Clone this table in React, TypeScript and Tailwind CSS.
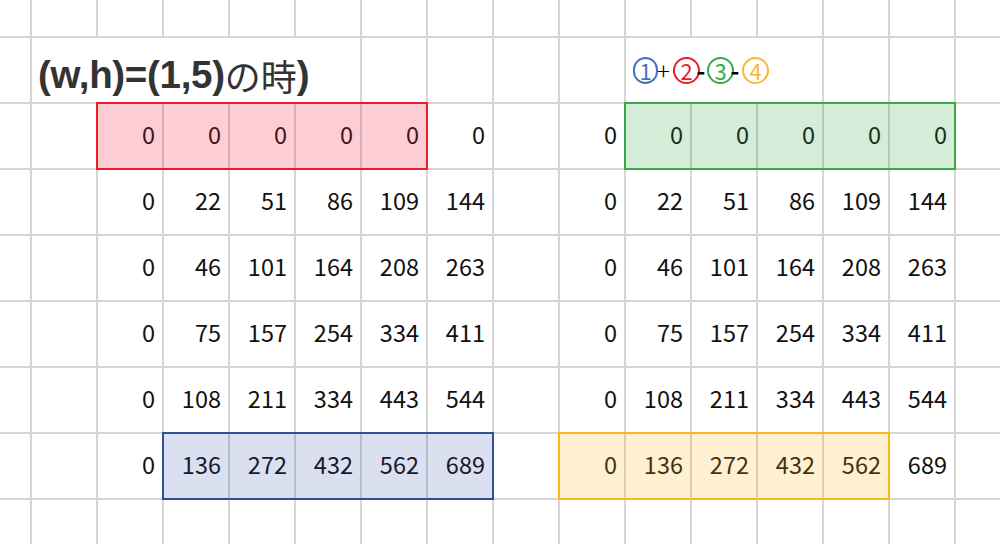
import React from 'react';

const values: number[][] = [
  [0, 0, 0, 0, 0, 0],
  [0, 22, 51, 86, 109, 144],
  [0, 46, 101, 164, 208, 263],
  [0, 75, 157, 254, 334, 411],
  [0, 108, 211, 334, 443, 544],
  [0, 136, 272, 432, 562, 689],
];

const cell = 'bg-white';
const numFont = { fontFamily: '"Noto Sans CJK JP", "Noto Sans", sans-serif' };

// highlight box laid over 5 cells, starts in its host cell
type Box = 'red' | 'green' | 'blue' | 'yellow';
const boxClass: Record<Box, string> = {
  red: 'border-[#ee1d2a] bg-[rgba(240,20,50,0.21)]',
  green: 'border-[#3aa847] bg-[rgba(40,160,60,0.2)]',
  blue: 'border-[#2f4f96] bg-[rgba(40,70,170,0.17)]',
  yellow: 'border-[#fbb917] bg-[rgba(250,180,20,0.2)]',
};

const NumCell: React.FC<{ value?: number; box?: Box }> = ({ value, box }) => (
  <div
    className={`${cell} ${box ? 'relative' : ''} flex items-center justify-end pr-[7px] pb-[2px] text-[23.5px] text-[#111]`}
    style={numFont}
  >
    {value}
    {box && (
      <div
        className={`absolute z-10 -left-[2px] -top-[2px] w-[332px] h-[68px] border-2 pointer-events-none ${boxClass[box]}`}
      />
    )}
  </div>
);

const Circle: React.FC<{ n: string; color: string; className?: string }> = ({ n, color, className }) => (
  <span
    className={`inline-flex items-center justify-center h-[27px] rounded-full border-2 text-[22px] leading-none ${color} ${className ?? ''}`}
  >
    {n}
  </span>
);

const Op: React.FC<{ children: string; className?: string }> = ({ children, className }) => (
  <span className={`inline-flex justify-center text-[24px] leading-none text-black ${className ?? ''}`}>
    {children}
  </span>
);

export default function App() {
  const dataRow = (r: number) => {
    const v = values[r];
    return (
      <React.Fragment key={r}>
        <div className={cell} />
        <div className={cell} />
        {v.map((x, i) => (
          <NumCell
            key={`l${i}`}
            value={x}
            box={r === 0 && i === 0 ? 'red' : r === 5 && i === 1 ? 'blue' : undefined}
          />
        ))}
        <div className={cell} />
        {v.map((x, i) => (
          <NumCell
            key={`r${i}`}
            value={x}
            box={r === 0 && i === 1 ? 'green' : r === 5 && i === 0 ? 'yellow' : undefined}
          />
        ))}
        <div className={cell} />
      </React.Fragment>
    );
  };

  const emptyRow = (k: string) =>
    Array.from({ length: 16 }).map((_, i) => <div key={`${k}${i}`} className={cell} />);

  return (
    <div className="w-[1000px] h-[544px] overflow-hidden bg-[#d5d5d5]">
      <div className="grid grid-cols-[30px_repeat(14,64px)_44px] grid-rows-[36px_repeat(7,64px)_44px] gap-[2px]">
        {emptyRow('top')}

        {/* title row */}
        <div className={cell} />
        <div className={`${cell} col-span-5 flex items-end pl-[6px] pb-[4px] text-[#333] leading-[46px]`}>
          <span className="text-[38.5px] font-bold tracking-[-0.3px]" style={{ fontFamily: '"Liberation Sans", Arial, sans-serif' }}>
            (w,h)=(1,5)
          </span>
          <span className="text-[36px]" style={{ fontFamily: '"Noto Sans CJK JP", sans-serif' }}>
            の時
          </span>
          <span className="text-[38.5px] font-bold" style={{ fontFamily: '"Liberation Sans", Arial, sans-serif' }}>
            )
          </span>
        </div>
        <div className={cell} />
        <div className={cell} />
        <div className={cell} />
        <div className={cell} />
        <div className={`${cell} col-span-3 flex items-center pl-[7px]`} style={numFont}>
          <Circle n="1" color="border-[#4472c4] text-[#4472c4]" className="w-[25px]" />
          <Op className="-ml-[1px] w-[13px] font-light">+</Op>
          <Circle n="2" color="border-[#ed1c24] text-[#ed1c24]" className="ml-[3px] w-[27px]" />
          <Op className="-ml-[3px] w-[8px] font-bold">-</Op>
          <Circle n="3" color="border-[#3aa847] text-[#3aa847]" className="ml-[2px] w-[27px]" />
          <Op className="-ml-[3px] w-[8px] font-bold">-</Op>
          <Circle n="4" color="border-[#fbb731] text-[#fbb731]" className="ml-[3px] w-[27px]" />
        </div>
        <div className={cell} />
        <div className={cell} />
        <div className={cell} />

        {[0, 1, 2, 3, 4, 5].map((r) => dataRow(r))}

        {emptyRow('bottom')}
      </div>
    </div>
  );
}
